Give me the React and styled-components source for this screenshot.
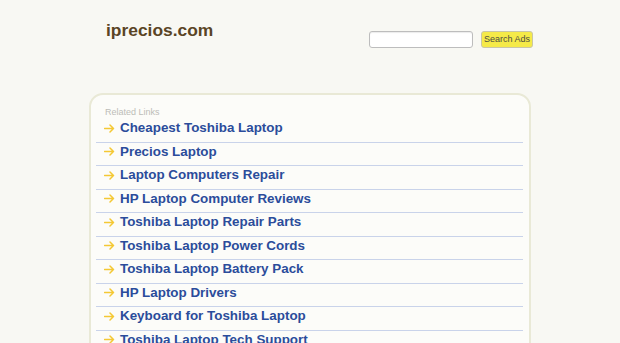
import React from 'react';
import styled, { createGlobalStyle } from 'styled-components';

const GlobalStyle = createGlobalStyle`
  body {
    margin: 0;
    background: #f8f8f3;
    font-family: "Liberation Sans", Arial, sans-serif;
  }
`;

const Page = styled.div`
  width: 620px;
  height: 343px;
  overflow: hidden;
`;

const Header = styled.header`
  display: flex;
  justify-content: space-between;
  align-items: flex-start;
  padding: 20px 87px 0 106px;
  height: 73px;
  box-sizing: border-box;
`;

const Logo = styled.a`
  font-size: 17.4px;
  line-height: 20px;
  font-weight: bold;
  color: #5a4424;
  text-decoration: none;
`;

const SearchForm = styled.form`
  display: flex;
  gap: 8px;
  margin-top: 11px;
`;

const SearchInput = styled.input`
  width: 104px;
  height: 17px;
  box-sizing: border-box;
  border: 1px solid #bdbdbd;
  border-radius: 3px;
  background: #fff;
  box-shadow: inset 0 1px 1px rgba(0, 0, 0, 0.08);
  padding: 0 3px;
`;

const SearchButton = styled.button`
  width: 52px;
  height: 17px;
  box-sizing: border-box;
  border: 1px solid #c9c6a6;
  border-radius: 3px;
  background: #f5ea48;
  color: #4e4e40;
  font-family: "Liberation Sans", Arial, sans-serif;
  font-size: 9px;
  padding: 0;
  line-height: 15px;
`;

const Panel = styled.section`
  width: 442px;
  margin: 20px auto 0;
  box-sizing: border-box;
  border: 2px solid #e9e9d6;
  border-radius: 14px;
  background: #fcfcf9;
  padding: 10px 6px 0 5px;
`;

const Label = styled.div`
  font-size: 9px;
  line-height: 14px;
  color: #bdbdb8;
  padding-left: 9px;
`;

const LinkList = styled.ul`
  list-style: none;
  margin: 0;
  padding: 0;
`;

const LinkRow = styled.li`
  display: flex;
  align-items: center;
  height: 23.5px;
  box-sizing: border-box;
  padding: 0 0 4px 8px;
  border-bottom: 1px solid #c9d3ea;
`;

const ArrowIcon = styled.svg`
  width: 11px;
  height: 9px;
  margin-right: 5px;
  flex-shrink: 0;
`;

const LinkText = styled.a`
  font-size: 13.4px;
  line-height: 18px;
  font-weight: bold;
  color: #2b4c9b;
  text-decoration: none;
`;

const Arrow = () => (
  <ArrowIcon viewBox="0 0 11 9">
    <path
      d="M0.5 4.5H9.5M6 1L9.5 4.5L6 8"
      fill="none"
      stroke="#f4c834"
      strokeWidth="1.5"
      strokeLinecap="round"
      strokeLinejoin="round"
    />
  </ArrowIcon>
);

const links = [
  'Cheapest Toshiba Laptop',
  'Precios Laptop',
  'Laptop Computers Repair',
  'HP Laptop Computer Reviews',
  'Toshiba Laptop Repair Parts',
  'Toshiba Laptop Power Cords',
  'Toshiba Laptop Battery Pack',
  'HP Laptop Drivers',
  'Keyboard for Toshiba Laptop',
  'Toshiba Laptop Tech Support',
];

export default function App() {
  return (
    <Page>
      <GlobalStyle />
      <Header>
        <Logo href="#">iprecios.com</Logo>
        <SearchForm onSubmit={(e) => e.preventDefault()}>
          <SearchInput type="text" />
          <SearchButton type="submit">Search Ads</SearchButton>
        </SearchForm>
      </Header>
      <Panel>
        <Label>Related Links</Label>
        <LinkList>
          {links.map((text) => (
            <LinkRow key={text}>
              <Arrow />
              <LinkText href="#">{text}</LinkText>
            </LinkRow>
          ))}
        </LinkList>
      </Panel>
    </Page>
  );
}
